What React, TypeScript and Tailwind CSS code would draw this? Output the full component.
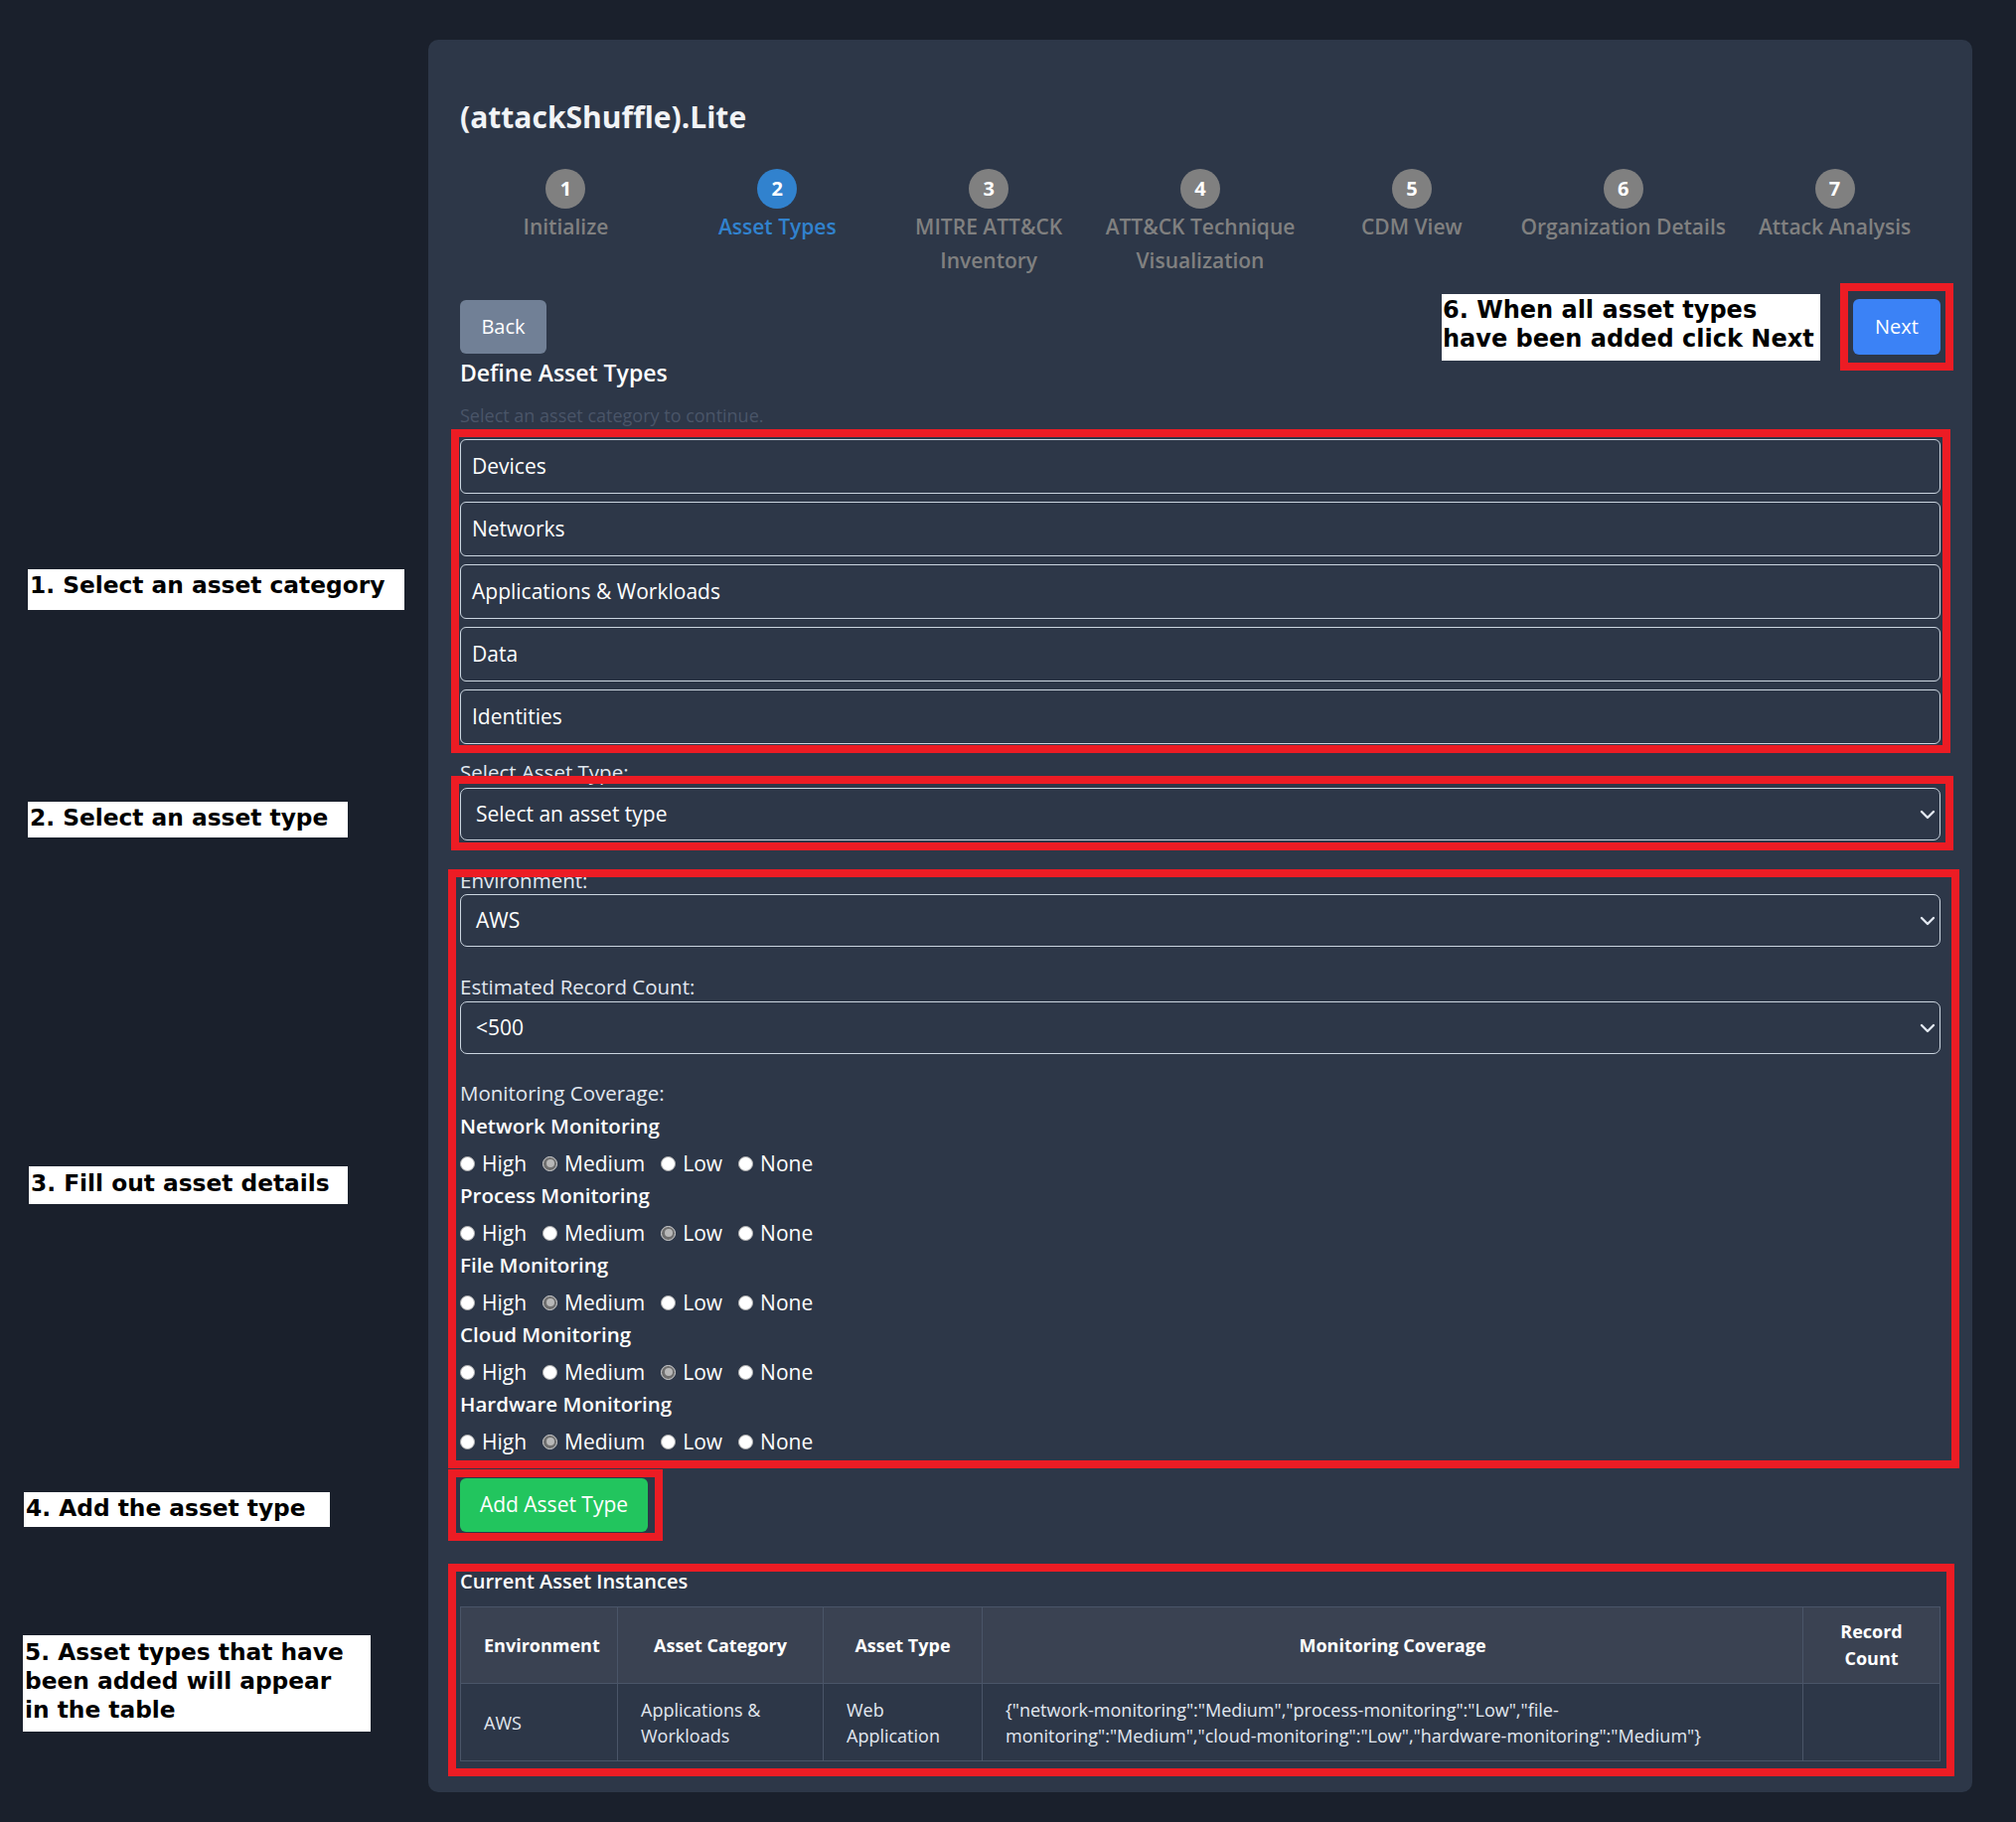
import React from 'react';
import { ChevronDown } from 'lucide-react';

function RedBox({ className }: { className: string }) {
  return <div className={'pointer-events-none absolute border-[8px] border-[#ec1c24] ' + className} />;
}

function Note({ className, children }: { className: string; children: React.ReactNode }) {
  return (
    <div
      className={
        "absolute bg-white pl-[2px] font-['DejaVu_Sans',sans-serif] text-[23.3px] font-bold leading-[29px] text-black " +
        className
      }
    >
      {children}
    </div>
  );
}

function FakeSelect({ value }: { value: string }) {
  return (
    <div className="flex h-[53px] items-center justify-between rounded-[7px] border border-[#cbd5e0] pl-[15px] text-[21px] text-white">
      <span>{value}</span>
      <ChevronDown size={24} strokeWidth={2.4} className="text-[#e2e8f0]" />
    </div>
  );
}

function Radio({ checked, label }: { checked: boolean; label: string }) {
  return (
    <div className="mr-[16px] flex items-center">
      {checked ? (
        <span className="flex h-[15px] w-[15px] items-center justify-center rounded-full border border-[#d4d4d4] bg-[#6e6e6e]">
          <span className="h-[8px] w-[8px] rounded-full bg-[#b8b8b8]" />
        </span>
      ) : (
        <span className="h-[15px] w-[15px] rounded-full border border-[#b0b0b0] bg-white" />
      )}
      <span className="ml-[7px] text-[21px] leading-[28px] text-white">{label}</span>
    </div>
  );
}

const steps: { n: number; label: React.ReactNode; active?: boolean }[] = [
  { n: 1, label: 'Initialize' },
  { n: 2, label: 'Asset Types', active: true },
  { n: 3, label: (<>MITRE ATT&amp;CK<br />Inventory</>) },
  { n: 4, label: (<>ATT&amp;CK Technique<br />Visualization</>) },
  { n: 5, label: 'CDM View' },
  { n: 6, label: 'Organization Details' },
  { n: 7, label: 'Attack Analysis' },
];

const categories = ['Devices', 'Networks', 'Applications & Workloads', 'Data', 'Identities'];

const monitoring: { name: string; value: string }[] = [
  { name: 'Network Monitoring', value: 'Medium' },
  { name: 'Process Monitoring', value: 'Low' },
  { name: 'File Monitoring', value: 'Medium' },
  { name: 'Cloud Monitoring', value: 'Low' },
  { name: 'Hardware Monitoring', value: 'Medium' },
];

const levels = ['High', 'Medium', 'Low', 'None'];

export default function App() {
  return (
    <div className="relative min-h-[1834px] w-[2029px] bg-[#1a202c] pl-[431px] pt-[40px] font-['Open_Sans',sans-serif]">
      {/* left annotations */}
      <Note className="left-[28px] top-[573px] h-[41px] w-[379px] pt-[1px]">1. Select an asset category</Note>
      <Note className="left-[28px] top-[807px] h-[36px] w-[322px] pt-[1px]">2. Select an asset type</Note>
      <Note className="left-[29px] top-[1174px] h-[38px] w-[321px] pt-[2px]">3. Fill out asset details</Note>
      <Note className="left-[24px] top-[1502px] h-[35px] w-[308px] pt-[1px]">4. Add the asset type</Note>
      <Note className="left-[23px] top-[1646px] h-[97px] w-[350px] pt-[2px]">
        5. Asset types that have
        <br />
        been added will appear
        <br />
        in the table
      </Note>

      <div className="w-[1554px] rounded-[10px] bg-[#2d3748] px-[32px] pb-[31px] pt-[59px]">
        <h1 className="text-[30px] font-bold leading-[38px] text-[#f1f3f6]">(attackShuffle).Lite</h1>

        {/* stepper */}
        <div className="mt-[33px] flex">
          {steps.map((s) => (
            <div key={s.n} className="flex flex-1 flex-col items-center">
              <div
                className={
                  'flex h-[40px] w-[40px] items-center justify-center rounded-full text-[20px] font-bold text-white ' +
                  (s.active ? 'bg-[#3182ce]' : 'bg-[#808080]')
                }
              >
                {s.n}
              </div>
              <div
                className={
                  'mt-[1px] whitespace-nowrap text-center text-[21px] font-semibold leading-[34px] ' +
                  (s.active ? 'text-[#3182ce]' : 'text-[#808080]')
                }
              >
                {s.label}
              </div>
            </div>
          ))}
        </div>

        {/* buttons */}
        <div className="relative mt-[23px] flex h-[54px] items-center justify-between">
          <button className="h-[54px] w-[87px] rounded-[6px] bg-[#718096] text-[20px] text-white">Back</button>
          <div className="absolute right-[121px] top-[-6px] h-[67px] w-[381px] bg-white pl-[1px] pt-[2px] font-['DejaVu_Sans',sans-serif] text-[24px] font-bold leading-[29px] text-black">
            6. When all asset types
            <br />
            have been added click Next
          </div>
          <div className="relative">
            <button className="h-[56px] w-[88px] rounded-[6px] bg-[#3b82f6] text-[20px] text-white">Next</button>
            <RedBox className="-bottom-[16px] -left-[13px] -right-[13px] -top-[16px]" />
          </div>
        </div>

        <h2 className="mt-[4px] text-[23px] font-semibold leading-[30px] text-white">Define Asset Types</h2>
        <p className="mt-[15px] text-[18px] leading-[26px] text-[#4a5568]">Select an asset category to continue.</p>

        {/* categories */}
        <div className="relative mt-[11px] flex flex-col gap-[8px]">
          {categories.map((c) => (
            <div
              key={c}
              className="flex h-[55px] items-center rounded-[6px] border border-[#cbd5e0] pl-[11px] text-[21px] text-white"
            >
              {c}
            </div>
          ))}
          <RedBox className="-bottom-[9px] -left-[9px] -right-[10px] -top-[10px]" />
        </div>

        {/* asset type */}
        <div className="relative mt-[14px]">
          <div className="text-[20.5px] leading-[28px] text-[#e2e8f0]">Select Asset Type:</div>
          <div className="mt-[2px]">
            <FakeSelect value="Select an asset type" />
          </div>
          <RedBox className="-bottom-[10px] -left-[9px] -right-[13px] top-[18px]" />
        </div>

        {/* details */}
        <div className="relative mt-[26px]">
          <div className="text-[20.5px] leading-[28px] text-[#e2e8f0]">Environment:</div>
          <FakeSelect value="AWS" />
          <div className="mt-[26px] text-[20.5px] leading-[28px] text-[#e2e8f0]">Estimated Record Count:</div>
          <div className="mt-[1px]">
            <FakeSelect value="<500" />
          </div>
          <div className="mt-[25px] text-[20.5px] leading-[28px] text-[#e2e8f0]">Monitoring Coverage:</div>
          <div className="mt-[5px] flex flex-col">
            {monitoring.map((m, i) => (
              <div key={m.name} className={i > 0 ? 'mt-[4px]' : ''}>
                <div className="text-[20.5px] font-semibold leading-[28px] text-white">{m.name}</div>
                <div className="mt-[10px] flex h-[28px] items-center">
                  {levels.map((l) => (
                    <Radio key={l} label={l} checked={l === m.value} />
                  ))}
                </div>
              </div>
            ))}
          </div>
          <RedBox className="-bottom-[13px] -left-[12px] -right-[19px] top-[3px]" />
        </div>

        {/* add button */}
        <div className="relative mt-[23px] w-[189px]">
          <button className="h-[54px] w-[189px] rounded-[6px] bg-[#22c55e] text-[21px] text-white">Add Asset Type</button>
          <RedBox className="-bottom-[9px] -left-[12px] -right-[15px] -top-[9px]" />
        </div>

        {/* table */}
        <div className="relative mt-[36px]">
          <div className="text-[20px] font-semibold leading-[28px] text-white">Current Asset Instances</div>
          <table className="mt-[11px] w-full table-fixed border-collapse text-[18px]">
            <colgroup>
              <col className="w-[158px]" />
              <col className="w-[207px]" />
              <col className="w-[160px]" />
              <col />
              <col className="w-[138px]" />
            </colgroup>
            <thead>
              <tr className="h-[77px] bg-[#3a4252]">
                {['Environment', 'Asset Category', 'Asset Type', 'Monitoring Coverage', 'Record Count'].map((h) => (
                  <th
                    key={h}
                    className="border border-[#4a5568] px-[23px] text-center text-[18px] font-bold leading-[27px] text-white"
                  >
                    {h}
                  </th>
                ))}
              </tr>
            </thead>
            <tbody>
              <tr className="h-[78px]">
                <td className="border border-[#4a5568] px-[23px] leading-[26px] text-[#e2e8f0]">AWS</td>
                <td className="border border-[#4a5568] px-[23px] leading-[26px] text-[#e2e8f0]">Applications &amp; Workloads</td>
                <td className="border border-[#4a5568] px-[23px] leading-[26px] text-[#e2e8f0]">Web Application</td>
                <td className="border border-[#4a5568] px-[23px] leading-[26px] text-[#e2e8f0]">
                  {'{"network-monitoring":"Medium","process-monitoring":"Low","file-monitoring":"Medium","cloud-monitoring":"Low","hardware-monitoring":"Medium"}'}
                </td>
                <td className="border border-[#4a5568] px-[23px] leading-[26px] text-[#e2e8f0]"></td>
              </tr>
            </tbody>
          </table>
          <RedBox className="-bottom-[15px] -left-[12px] -right-[14px] -top-[4px]" />
        </div>
      </div>
    </div>
  );
}
